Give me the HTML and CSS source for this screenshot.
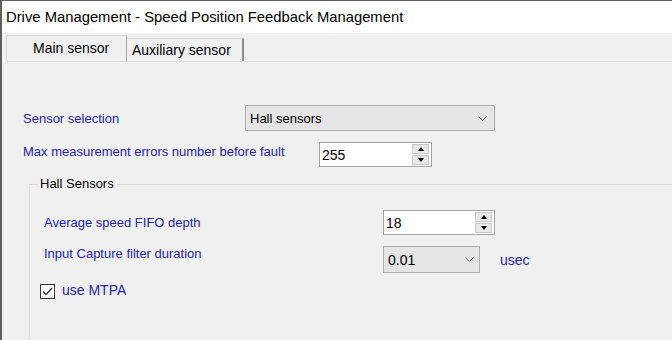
FILE: index.html
```html
<!DOCTYPE html>
<html>
	<head>
		<meta charset="utf-8" />
		<link rel="stylesheet" href="styles.css">
	</head>
	<body>
		<div class="window">
			<div class="titlebar">Drive Management - Speed Position Feedback Management</div>
			<div class="content">
				<div class="tabs">
					<div class="tab active">Main sensor</div>
					<div class="tab">Auxiliary sensor</div>
				</div>
				<div class="panel">
					<div class="row row-first">
						<label class="lbl lbl-sensor">Sensor selection</label>
						<div class="combo combo-sensor">
							<span>Hall sensors</span>
							<svg class="chevron" width="9" height="5" viewBox="0 0 9 5"><path d="M0.5 0.5 L4.5 4.5 L8.5 0.5" fill="none" stroke="#606060" stroke-width="1"/></svg>
						</div>
					</div>
					<div class="row row-next">
						<label class="lbl lbl-max">Max measurement errors number before fault</label>
						<div class="spin spin-max">
							<span>255</span>
							<div class="spin-btns"><div class="spin-btn up"></div><div class="spin-btn down"></div></div>
						</div>
					</div>
					<fieldset class="group">
						<legend>Hall Sensors</legend>
						<div class="row row-fifo">
							<label class="lbl lbl-group">Average speed FIFO depth</label>
							<div class="spin spin-fifo">
								<span>18</span>
								<div class="spin-btns"><div class="spin-btn up"></div><div class="spin-btn down"></div></div>
							</div>
						</div>
						<div class="row row-next">
							<label class="lbl lbl-group lbl-top">Input Capture filter duration</label>
							<div class="combo combo-filter">
								<span>0.01</span>
								<svg class="chevron" width="9" height="5" viewBox="0 0 9 5"><path d="M0.5 0.5 L4.5 4.5 L8.5 0.5" fill="none" stroke="#606060" stroke-width="1"/></svg>
							</div>
							<span class="lbl unit">usec</span>
						</div>
						<div class="check-row">
							<span class="check"><svg width="13" height="13" viewBox="0 0 13 13"><path d="M2 6.5 L5 9.5 L11 3" fill="none" stroke="#333" stroke-width="1.4"/></svg></span>
							<span class="lbl check-lbl">use MTPA</span>
						</div>
					</fieldset>
				</div>
			</div>
		</div>
	</body>
</html>
```

FILE: styles.css
```css
body {
	margin: 0;
	width: 672px;
	height: 340px;
	overflow: hidden;
	font-family: "Liberation Sans", Arial, sans-serif;
	background-color: #f0f0f0;
}

.window {
	height: 340px;
	box-sizing: border-box;
	border-top: 1px solid #5f5f5f;
	border-left: 2px solid #5f5f5f;
	display: flex;
	flex-direction: column;
	background-color: #f0f0f0;
	overflow: hidden;
}

.titlebar {
	height: 32px;
	line-height: 32px;
	padding-left: 4px;
	background-color: #fff;
	font-size: 14.8px;
	color: #000;
	white-space: nowrap;
}

.content {
	flex: 1;
	min-height: 0;
	padding: 2px 0 0 4px;
	display: flex;
	flex-direction: column;
}

/* tabs */
.tabs {
	display: flex;
	align-items: flex-end;
	height: 26px;
}

.tab {
	box-sizing: border-box;
	font-size: 14px;
	color: #000;
	white-space: nowrap;
}

.tab.active {
	width: 121px;
	height: 26px;
	line-height: 24px;
	padding-left: 26px;
	border-left: 1px solid #d9d9d9;
	border-top: 1px solid #d9d9d9;
	border-right: 1px solid #a8a8a8;
}

.tab:not(.active) {
	width: 117px;
	height: 23px;
	line-height: 22px;
	padding-left: 5px;
	border-top: 1px solid #d9d9d9;
	border-right: 2px solid #8c8c8c;
}

.panel {
	flex: 1;
	min-height: 0;
	overflow: hidden;
	border-top: 1px solid #d9d9d9;
	border-left: 1px solid #fafafa;
	padding: 43px 0 0 16px;
}

/* rows */
.row {
	display: flex;
	align-items: center;
}

.row-next { margin-top: 11px; }

.lbl {
	font-size: 13px;
	line-height: 15px;
	color: #2424aa;
	white-space: nowrap;
}

.lbl-sensor { width: 222px; }
.lbl-max { width: 296px; align-self: flex-start; margin-top: 2px; }
.lbl-group { width: 339px; }
.lbl-top { align-self: flex-start; }

.combo {
	box-sizing: border-box;
	display: flex;
	align-items: center;
	justify-content: space-between;
	border: 1px solid #adadad;
	background-color: #e5e5e5;
	padding: 0 7px 0 4px;
	font-size: 13px;
	color: #000;
}

.combo-sensor { width: 250px; height: 26px; }
.combo-filter { width: 97px; height: 27px; padding-right: 5px; font-size: 14px; }

.spin {
	box-sizing: border-box;
	display: flex;
	align-items: center;
	justify-content: space-between;
	height: 25px;
	border: 1px solid #a3a3a3;
	background-color: #fff;
	padding-left: 2px;
	font-size: 14px;
	color: #000;
}

.spin-max { width: 113px; }
.spin-fifo { width: 112px; }

.spin-btns {
	display: flex;
	flex-direction: column;
	width: 17px;
	height: 21px;
	margin-right: 2px;
	gap: 1px;
}

.spin-btn {
	flex: 1;
	background-color: #e8e8e8;
	border: 1px solid #c8c8c8;
	display: flex;
	align-items: center;
	justify-content: center;
}

.spin-btn.up::after {
	content: "";
	border-left: 3px solid transparent;
	border-right: 3px solid transparent;
	border-bottom: 4px solid #000;
}

.spin-btn.down::after {
	content: "";
	border-left: 3px solid transparent;
	border-right: 3px solid transparent;
	border-top: 4px solid #000;
}

.unit {
	margin-left: 20px;
	font-size: 14px;
	line-height: 16px;
}

/* group box: runs on past the right and bottom edges of the panel */
.group {
	margin: 10px -40px 0 6px;
	padding: 0 0 60px 14px;
	border: 1px solid #dcdcdc;
	min-width: 0;
}

.group legend {
	margin-left: -6px;
	padding: 0 2px;
	font-size: 13px;
	line-height: 14px;
	color: #000;
}

.row-fifo { margin-top: 19px; }

.check-row {
	display: flex;
	align-items: flex-start;
	margin: 11px 0 0 -4px;
}

.check {
	box-sizing: border-box;
	width: 15px;
	height: 15px;
	border: 1px solid #333;
	background-color: #fff;
	display: flex;
	align-items: center;
	justify-content: center;
}

.check-lbl {
	margin: -2px 0 0 7px;
	font-size: 14px;
	line-height: 16px;
}
```
